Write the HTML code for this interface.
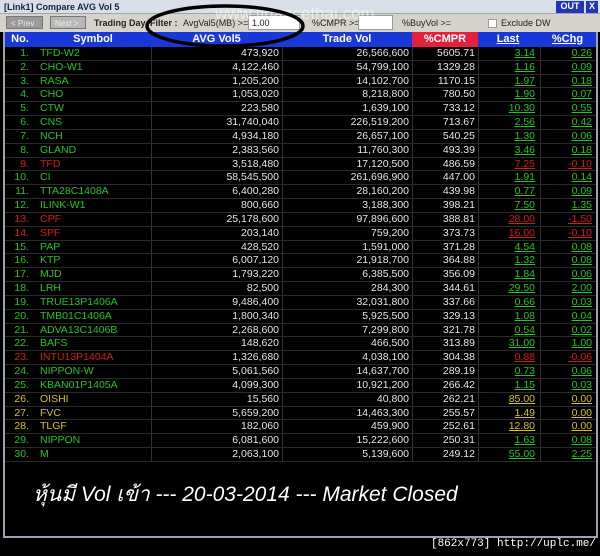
<!DOCTYPE html>
<html><head><meta charset="utf-8"><style>
*{margin:0;padding:0;box-sizing:border-box}
body{width:600px;height:556px;background:#000;position:relative;overflow:hidden;font-family:"Liberation Sans",Arial,sans-serif}
.title{position:absolute;left:0;top:0;width:600px;height:14px;background:#d8dfe8;border-bottom:1px solid #9aa;font-size:9px;font-weight:bold;color:#124;padding:2px 0 0 4px}
.out{position:absolute;top:1px;right:16px;width:28px;height:12px;background:#2035b8;color:#fff;font-size:9px;font-weight:bold;text-align:center}
.x{position:absolute;top:1px;right:2px;width:12px;height:12px;background:#2035b8;color:#fff;font-size:9px;font-weight:bold;text-align:center}
.tb{position:absolute;left:0;top:14px;width:600px;height:18px;background:#d6d3cc;font-size:9px;color:#222}
.tb span{position:absolute;top:4px}
.btn{position:absolute;top:2px;height:13px;background:#9a9a9a;color:#eee;font-size:8px;padding:2px 4px;border:1px solid #777}
.inp{position:absolute;top:1px;height:15px;background:#fff;border:1px solid #999}
.win{position:absolute;left:3px;top:32px;width:595px;height:506px;background:#000;border-left:2px solid #9aa3b0;border-right:2px solid #9aa3b0;border-bottom:2px solid #9aa3b0}
.hd{position:absolute;left:0;top:0;width:591px;height:15px;background:#1838d8;color:#fff;font-weight:bold;font-size:11px}
.hd div,.r div{position:absolute;top:0;height:100%}
.rows{position:absolute;left:0;top:15px;width:591px}
.r{position:relative;height:13.83px;border-bottom:1px solid #2a2a2a;font-size:10.5px;line-height:13px;color:#e6e6e6}
.c0{left:0;width:24px;text-align:right}
.c1{left:35px;width:110px}
.c2{left:146px;width:131px;text-align:right;border-left:1px solid #333}
.c3{left:277px;width:130px;text-align:right;border-left:1px solid #333}
.c4{left:407px;width:66px;text-align:right;border-left:1px solid #333}
.c5{left:473px;width:60px;text-align:right;border-left:1px solid #333;text-decoration:underline}
.c6{left:535px;width:55px;text-align:right;border-left:1px solid #333;text-decoration:underline}
.hd div{text-align:center!important;border:none!important;line-height:15px}
.r .c2,.r .c3,.r .c4,.r .c5,.r .c6{padding-right:3px}
.g .c0,.g .c1,.g .c5,.g .c6{color:#22c426}
.d .c0,.d .c1,.d .c5,.d .c6{color:#d41a1a}
.y .c0,.y .c1,.y .c5,.y .c6{color:#d6c21e}
.thai{position:absolute;left:33px;top:478px;color:#fff;font-size:21px;font-style:italic;font-family:"Liberation Sans","Noto Sans CJK SC",sans-serif}
.foot{position:absolute;right:4px;top:538px;color:#fff;font-size:11px;font-family:"Liberation Mono",monospace}
</style></head><body>
<div class="title">[Link1] Compare AVG Vol 5</div>
<div class="out">OUT</div><div class="x">X</div>
<div class="tb">
<div class="btn" style="left:6px;width:37px">&lt; Prev</div>
<div class="btn" style="left:50px;width:36px;background:#b8b8b8">Next &gt;</div>
<span style="left:94px;font-weight:bold">Trading Day</span>
<span style="left:150px;font-weight:bold">Filter :</span>
<span style="left:183px">AvgVal5(MB) &gt;=</span>
<div class="inp" style="left:248px;width:52px"></div>
<span style="left:252px">1.00</span>
<span style="left:312px">%CMPR &gt;=</span>
<div class="inp" style="left:358px;width:35px"></div>
<span style="left:402px">%BuyVol &gt;=</span>
<div class="inp" style="left:488px;width:9px;height:9px;top:5px"></div>
<span style="left:501px">Exclude DW</span>
<span style="left:215px;top:-10px;font-size:17px;color:rgba(255,255,255,.55)">www.financethai.com</span>
</div>
<div class="win">
<div class="hd"><div class="c0" style="width:30px">No.</div><div class="c1" style="left:30px;width:116px">Symbol</div><div class="c2">AVG Vol5</div><div class="c3">Trade Vol</div><div class="c4" style="background:#e4203c">%CMPR</div><div class="c5">Last</div><div class="c6" style="text-decoration:underline">%Chg</div></div>
<div class="rows">
<div class="r g"><div class="c0">1.</div><div class="c1">TFD-W2</div><div class="c2">473,920</div><div class="c3">26,566,600</div><div class="c4">5605.71</div><div class="c5">3.14</div><div class="c6">0.26</div></div>
<div class="r g"><div class="c0">2.</div><div class="c1">CHO-W1</div><div class="c2">4,122,460</div><div class="c3">54,799,100</div><div class="c4">1329.28</div><div class="c5">1.16</div><div class="c6">0.09</div></div>
<div class="r g"><div class="c0">3.</div><div class="c1">RASA</div><div class="c2">1,205,200</div><div class="c3">14,102,700</div><div class="c4">1170.15</div><div class="c5">1.97</div><div class="c6">0.18</div></div>
<div class="r g"><div class="c0">4.</div><div class="c1">CHO</div><div class="c2">1,053,020</div><div class="c3">8,218,800</div><div class="c4">780.50</div><div class="c5">1.90</div><div class="c6">0.07</div></div>
<div class="r g"><div class="c0">5.</div><div class="c1">CTW</div><div class="c2">223,580</div><div class="c3">1,639,100</div><div class="c4">733.12</div><div class="c5">10.30</div><div class="c6">0.55</div></div>
<div class="r g"><div class="c0">6.</div><div class="c1">CNS</div><div class="c2">31,740,040</div><div class="c3">226,519,200</div><div class="c4">713.67</div><div class="c5">2.56</div><div class="c6">0.42</div></div>
<div class="r g"><div class="c0">7.</div><div class="c1">NCH</div><div class="c2">4,934,180</div><div class="c3">26,657,100</div><div class="c4">540.25</div><div class="c5">1.30</div><div class="c6">0.06</div></div>
<div class="r g"><div class="c0">8.</div><div class="c1">GLAND</div><div class="c2">2,383,560</div><div class="c3">11,760,300</div><div class="c4">493.39</div><div class="c5">3.46</div><div class="c6">0.18</div></div>
<div class="r d"><div class="c0">9.</div><div class="c1">TFD</div><div class="c2">3,518,480</div><div class="c3">17,120,500</div><div class="c4">486.59</div><div class="c5">7.25</div><div class="c6">-0.10</div></div>
<div class="r g"><div class="c0">10.</div><div class="c1">CI</div><div class="c2">58,545,500</div><div class="c3">261,696,900</div><div class="c4">447.00</div><div class="c5">1.91</div><div class="c6">0.14</div></div>
<div class="r g"><div class="c0">11.</div><div class="c1">TTA28C1408A</div><div class="c2">6,400,280</div><div class="c3">28,160,200</div><div class="c4">439.98</div><div class="c5">0.77</div><div class="c6">0.09</div></div>
<div class="r g"><div class="c0">12.</div><div class="c1">ILINK-W1</div><div class="c2">800,660</div><div class="c3">3,188,300</div><div class="c4">398.21</div><div class="c5">7.50</div><div class="c6">1.35</div></div>
<div class="r d"><div class="c0">13.</div><div class="c1">CPF</div><div class="c2">25,178,600</div><div class="c3">97,896,600</div><div class="c4">388.81</div><div class="c5">28.00</div><div class="c6">-1.50</div></div>
<div class="r d"><div class="c0">14.</div><div class="c1">SPF</div><div class="c2">203,140</div><div class="c3">759,200</div><div class="c4">373.73</div><div class="c5">16.00</div><div class="c6">-0.10</div></div>
<div class="r g"><div class="c0">15.</div><div class="c1">PAP</div><div class="c2">428,520</div><div class="c3">1,591,000</div><div class="c4">371.28</div><div class="c5">4.54</div><div class="c6">0.08</div></div>
<div class="r g"><div class="c0">16.</div><div class="c1">KTP</div><div class="c2">6,007,120</div><div class="c3">21,918,700</div><div class="c4">364.88</div><div class="c5">1.32</div><div class="c6">0.08</div></div>
<div class="r g"><div class="c0">17.</div><div class="c1">MJD</div><div class="c2">1,793,220</div><div class="c3">6,385,500</div><div class="c4">356.09</div><div class="c5">1.84</div><div class="c6">0.06</div></div>
<div class="r g"><div class="c0">18.</div><div class="c1">LRH</div><div class="c2">82,500</div><div class="c3">284,300</div><div class="c4">344.61</div><div class="c5">29.50</div><div class="c6">2.00</div></div>
<div class="r g"><div class="c0">19.</div><div class="c1">TRUE13P1406A</div><div class="c2">9,486,400</div><div class="c3">32,031,800</div><div class="c4">337.66</div><div class="c5">0.66</div><div class="c6">0.03</div></div>
<div class="r g"><div class="c0">20.</div><div class="c1">TMB01C1406A</div><div class="c2">1,800,340</div><div class="c3">5,925,500</div><div class="c4">329.13</div><div class="c5">1.08</div><div class="c6">0.04</div></div>
<div class="r g"><div class="c0">21.</div><div class="c1">ADVA13C1406B</div><div class="c2">2,268,600</div><div class="c3">7,299,800</div><div class="c4">321.78</div><div class="c5">0.54</div><div class="c6">0.02</div></div>
<div class="r g"><div class="c0">22.</div><div class="c1">BAFS</div><div class="c2">148,620</div><div class="c3">466,500</div><div class="c4">313.89</div><div class="c5">31.00</div><div class="c6">1.00</div></div>
<div class="r d"><div class="c0">23.</div><div class="c1">INTU13P1404A</div><div class="c2">1,326,680</div><div class="c3">4,038,100</div><div class="c4">304.38</div><div class="c5">0.88</div><div class="c6">-0.06</div></div>
<div class="r g"><div class="c0">24.</div><div class="c1">NIPPON-W</div><div class="c2">5,061,560</div><div class="c3">14,637,700</div><div class="c4">289.19</div><div class="c5">0.73</div><div class="c6">0.06</div></div>
<div class="r g"><div class="c0">25.</div><div class="c1">KBAN01P1405A</div><div class="c2">4,099,300</div><div class="c3">10,921,200</div><div class="c4">266.42</div><div class="c5">1.15</div><div class="c6">0.03</div></div>
<div class="r y"><div class="c0">26.</div><div class="c1">OISHI</div><div class="c2">15,560</div><div class="c3">40,800</div><div class="c4">262.21</div><div class="c5">85.00</div><div class="c6">0.00</div></div>
<div class="r y"><div class="c0">27.</div><div class="c1">FVC</div><div class="c2">5,659,200</div><div class="c3">14,463,300</div><div class="c4">255.57</div><div class="c5">1.49</div><div class="c6">0.00</div></div>
<div class="r y"><div class="c0">28.</div><div class="c1">TLGF</div><div class="c2">182,060</div><div class="c3">459,900</div><div class="c4">252.61</div><div class="c5">12.80</div><div class="c6">0.00</div></div>
<div class="r g"><div class="c0">29.</div><div class="c1">NIPPON</div><div class="c2">6,081,600</div><div class="c3">15,222,600</div><div class="c4">250.31</div><div class="c5">1.63</div><div class="c6">0.08</div></div>
<div class="r g"><div class="c0">30.</div><div class="c1">M</div><div class="c2">2,063,100</div><div class="c3">5,139,600</div><div class="c4">249.12</div><div class="c5">55.00</div><div class="c6">2.25</div></div>
</div>
</div>
<svg style="position:absolute;left:140px;top:2px" width="175" height="52"><ellipse cx="85" cy="24" rx="78" ry="20" fill="none" stroke="#000" stroke-width="3.5"/></svg>
<div class="thai">หุ้นมี Vol เข้า --- 20-03-2014 --- Market Closed</div>
<div class="foot">[862x773] http://uplc.me/</div>
</body></html>
